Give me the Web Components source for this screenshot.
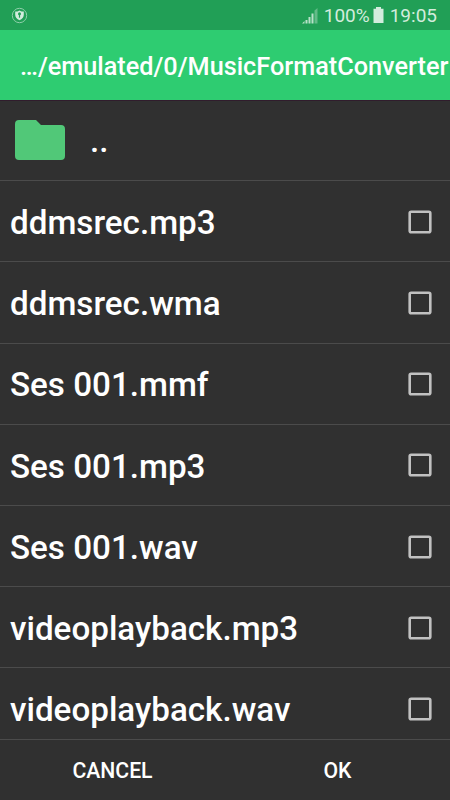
<!DOCTYPE html>
<html lang="en">
<head>
<meta charset="UTF-8">
<meta name="viewport" content="width=device-width, initial-scale=1">
<title>Music Format Converter</title>
<style>
  html, body {
    margin: 0;
    height: 100%;
    overflow: hidden;
    background: #303030;
    font-family: Roboto, "Noto Sans", sans-serif;
  }
</style>
</head>
<body>
<file-picker path="…/emulated/0/MusicFormatConverter"></file-picker>

<script>
// ==========================================
// STATUS BAR
// ==========================================
class StatusBar extends HTMLElement {
  constructor() {
    super();
    this.attachShadow({ mode: 'open' });
  }

  connectedCallback() {
    this.shadowRoot.innerHTML = `
      <style>
        :host {
          display: flex;
          align-items: center;
          box-sizing: border-box;
          height: 30px;
          padding: 1px 13px 0 11px;
          background: #219f56;
          color: #d3ecdd;
          font-size: 19px;
          line-height: 29px;
          white-space: nowrap;
        }
        svg { display: block; flex: none; margin-top: -1px; }
        .space { flex: 1; }
        .signal { margin: 0 6px 0 0; }
        .battery { margin: -1px 6px 0 3px; }
      </style>
      <svg width="17" height="17" viewBox="0 0 17 17">
        <circle cx="8.5" cy="8.5" r="7.2" fill="none" stroke="#8fcfaa" stroke-width="1"/>
        <path d="M8.5 3.4c1.3.9 2.8 1.2 4.3 1.2v3.2c0 2.6-1.7 4.5-4.3 5.5-2.6-1-4.3-2.9-4.3-5.5V4.6c1.5 0 3-.3 4.3-1.2z" fill="#d3ecdd"/>
        <circle cx="8.5" cy="6.8" r="1.5" fill="#219f56"/>
        <path d="M8.5 7v3.7" stroke="#219f56" stroke-width="1.2"/>
      </svg>
      <span class="space"></span>
      <svg class="signal" width="16" height="16" viewBox="0 0 16 16">
        <path d="M0 15.500l2.500-2.500v2.500zM3.500 12h2v3.500h-2zM6.500 9h2v6.500h-2zM9.500 5.500h2v10h-2z" fill="#b9e1c9"/>
        <path d="M12.500 2.500L15.500 0v15.500h-3z" fill="#63bb88"/>
      </svg>
      <span><slot name="charge"></slot></span>
      <svg class="battery" width="11" height="16" viewBox="0 0 11 16">
        <path d="M3 0h5v1.800h2.500V16H.5V1.800H3z" fill="#d3ecdd"/>
      </svg>
      <span><slot name="clock"></slot></span>
    `;
  }
}

// ==========================================
// TITLE BAR
// ==========================================
class PathBar extends HTMLElement {
  constructor() {
    super();
    this.attachShadow({ mode: 'open' });
  }

  connectedCallback() {
    this.shadowRoot.innerHTML = `
      <style>
        :host {
          display: block;
          box-sizing: border-box;
          height: 70px;
          padding: 1px 0 0 20px;
          background: #2ecc71;
          color: #fff;
          font-size: 25.25px;
          font-weight: 500;
          line-height: 72px;
          white-space: nowrap;
        }
      </style>
      <slot></slot>
    `;
  }
}

// ==========================================
// PARENT FOLDER ROW
// ==========================================
class FolderRow extends HTMLElement {
  constructor() {
    super();
    this.attachShadow({ mode: 'open' });
  }

  connectedCallback() {
    this.shadowRoot.innerHTML = `
      <style>
        :host {
          display: flex;
          align-items: center;
          box-sizing: border-box;
          height: 81.2px;
          padding-left: 15px;
          gap: 25px;
          border-top: 1px solid #301c2c;
          border-bottom: 1px solid #4b4b4b;
          color: #fff;
          font-size: 33.2px;
          font-weight: 500;
        }
        svg { display: block; flex: none; margin-top: -1px; }
      </style>
      <svg width="50" height="41" viewBox="0 0 50 41">
        <path d="M4 0h17l5 5h20a4 4 0 0 1 4 4v27a4 4 0 0 1-4 4H4a4 4 0 0 1-4-4V4a4 4 0 0 1 4-4z" fill="#51c878"/>
      </svg>
      <slot></slot>
    `;
  }
}

// ==========================================
// FILE ROW
// ==========================================
class FileRow extends HTMLElement {
  constructor() {
    super();
    this.attachShadow({ mode: 'open' });
  }

  connectedCallback() {
    this.shadowRoot.innerHTML = `
      <style>
        :host {
          display: flex;
          align-items: center;
          justify-content: space-between;
          box-sizing: border-box;
          height: 81.2px;
          padding: 0 18px 0 10px;
          border-bottom: 1px solid #4b4b4b;
          color: #fff;
          font-size: 33.2px;
          font-weight: 500;
          white-space: nowrap;
        }
        .name { padding-top: 2.4px; }
        .box { display: block; margin-top: 1px; }
        :host([checked]) .box rect { fill: #2ecc71; }
      </style>
      <span class="name"><slot></slot></span>
      <svg class="box" width="24" height="24" viewBox="0 0 24 24">
        <rect x="1.700" y="1.700" width="20.600" height="20.600" rx="1.500" fill="none" stroke="#c1c1c1" stroke-width="2.600"/>
      </svg>
    `;
    this.addEventListener('click', () => this.toggleAttribute('checked'));
  }
}

// ==========================================
// BUTTON BAR
// ==========================================
class ActionBar extends HTMLElement {
  constructor() {
    super();
    this.attachShadow({ mode: 'open' });
  }

  connectedCallback() {
    this.shadowRoot.innerHTML = `
      <style>
        :host {
          display: grid;
          grid-template-columns: 1fr 1fr;
          box-sizing: border-box;
          height: 61px;
          border-top: 1px solid #4b4b4b;
          background: #303030;
        }
        button {
          padding: 1px 0 0;
          border: 0;
          background: none;
          color: #fff;
          font: 500 21.2px Roboto, "Noto Sans", sans-serif;
        }
      </style>
      <button>CANCEL</button>
      <button>OK</button>
    `;
  }
}

// ==========================================
// SCREEN
// ==========================================
class FilePicker extends HTMLElement {
  constructor() {
    super();
    this.attachShadow({ mode: 'open' });
    this.files = [
      'ddmsrec.mp3',
      'ddmsrec.wma',
      'Ses 001.mmf',
      'Ses 001.mp3',
      'Ses 001.wav',
      'videoplayback.mp3',
      'videoplayback.wav',
    ];
  }

  connectedCallback() {
    this.shadowRoot.innerHTML = `
      <style>
        :host {
          display: flex;
          flex-direction: column;
          height: 100vh;
        }
        status-bar, path-bar, action-bar { flex: none; }
        .list {
          flex: 1;
          min-height: 0;
          overflow: hidden;
        }
      </style>
      <status-bar><span slot="charge">100%</span><span slot="clock">19:05</span></status-bar>
      <path-bar>${this.getAttribute('path')}</path-bar>
      <div class="list">
        <folder-row>..</folder-row>
        ${this.files.map(name => `<file-row>${name}</file-row>`).join('')}
      </div>
      <action-bar></action-bar>
    `;
  }
}

customElements.define('status-bar', StatusBar);
customElements.define('path-bar', PathBar);
customElements.define('folder-row', FolderRow);
customElements.define('file-row', FileRow);
customElements.define('action-bar', ActionBar);
customElements.define('file-picker', FilePicker);
</script>
</body>
</html>
